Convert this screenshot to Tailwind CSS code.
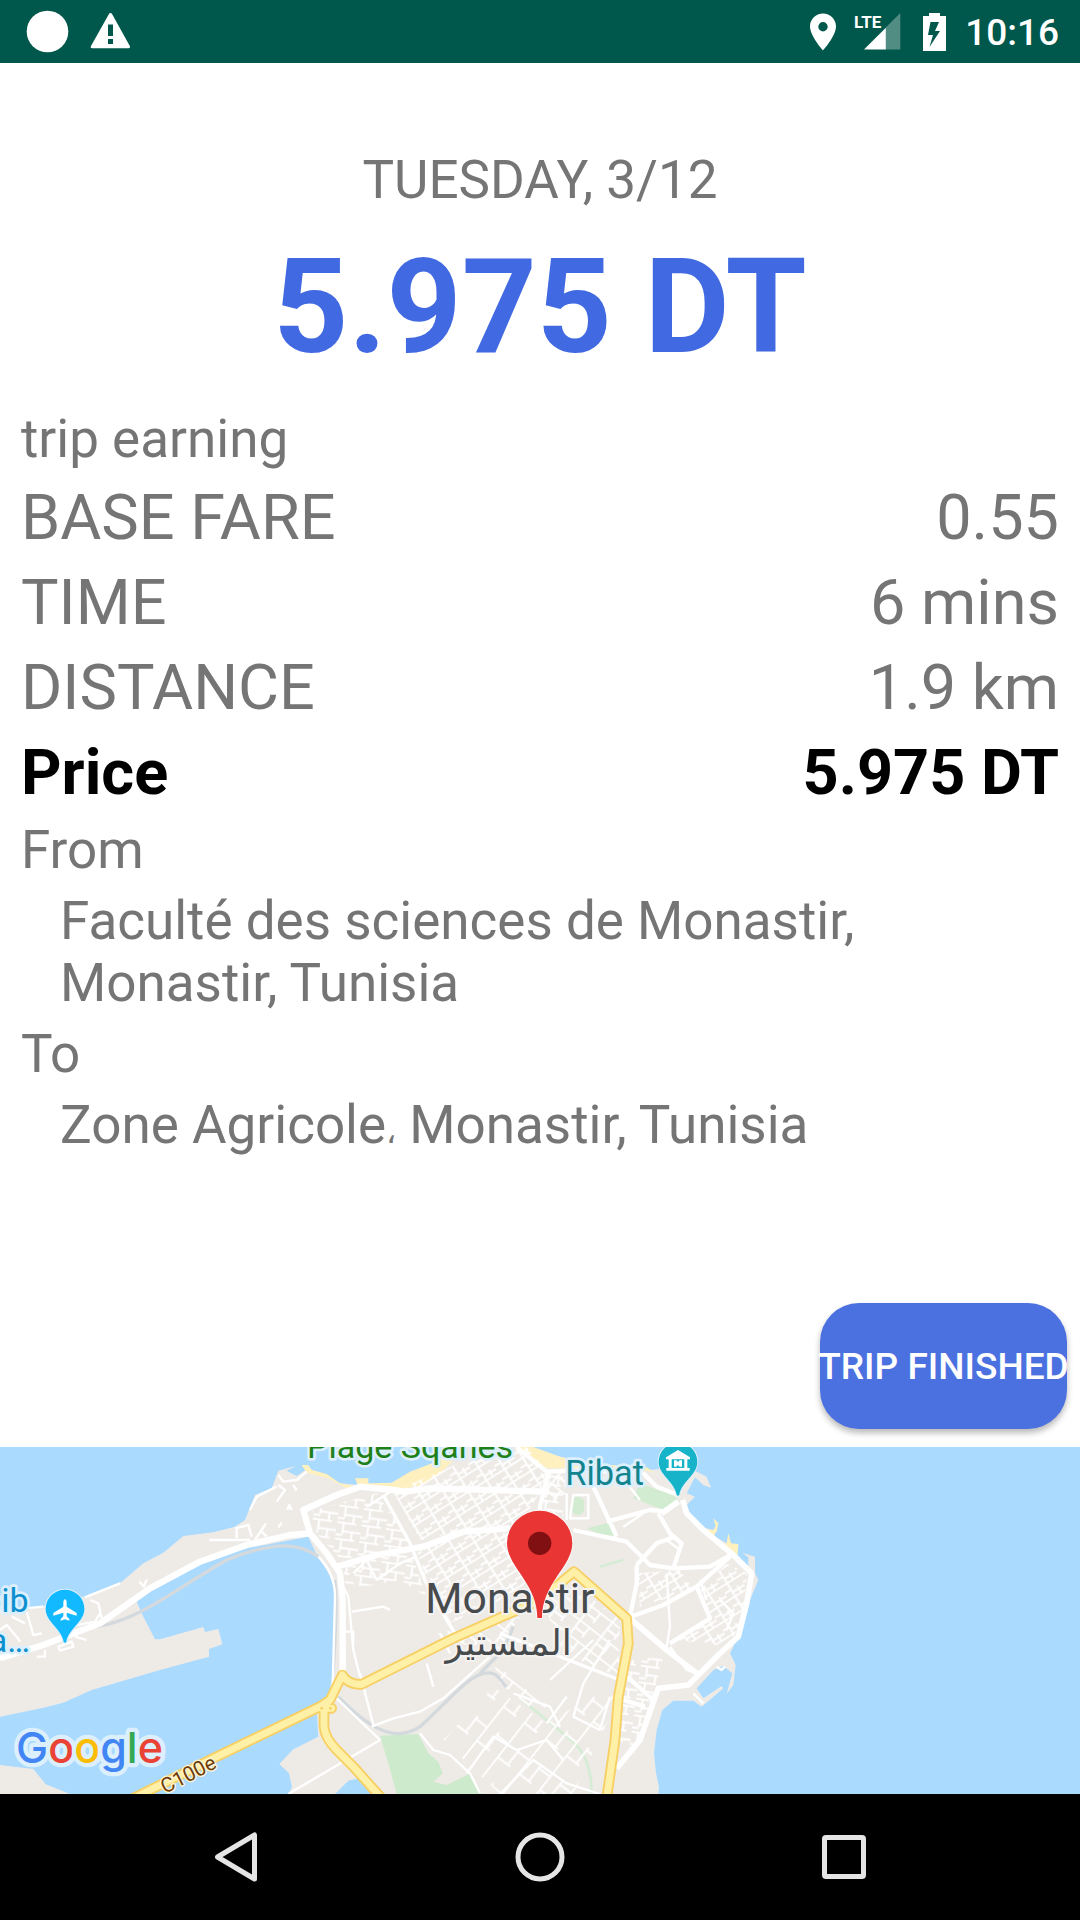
<!DOCTYPE html>
<html lang="en">
<head>
<meta charset="utf-8">
<meta name="viewport" content="width=device-width, initial-scale=1">
<title>Trip details</title>
<script src="https://cdn.jsdelivr.net/npm/@tailwindcss/browser@4"></script>
</head>
<body class="bg-white font-[Roboto,sans-serif] text-[#757575]">
<div class="flex min-h-screen flex-col">

  <!-- Status bar -->
  <header class="flex h-[63px] shrink-0 items-center justify-between bg-[#00574b] pl-[26px] pr-[21px] text-white">
    <div class="flex items-center gap-[21px]">
      <svg class="size-[43px]" viewBox="0 0 43 43" fill="currentColor" aria-hidden="true"><circle cx="21.5" cy="21.5" r="20.8"/></svg>
      <svg class="h-[43px] w-[41px]" viewBox="0 0 41 43" fill="currentColor" fill-rule="evenodd" aria-hidden="true"><path d="M20.5 3q1 0 1.700 1.200L39.800 36q.8 2.300-1.300 2.300h-36Q-.1 38.300 1 36L18.800 4.200Q19.500 3 20.500 3zM18 14.500v11.500h5V14.500zM18 29v5h5v-5z"/></svg>
    </div>
    <div class="flex items-center">
      <svg class="mr-[17px] h-[38px] w-[28px]" viewBox="0 0 28 38" fill="currentColor" fill-rule="evenodd" aria-hidden="true"><path d="M14 .5C6.800.5 1 6.200 1 13.500 1 23 14 37.500 14 37.500S27 23 27 13.500C27 6.200 21.200.5 14 .5zM14 9a4.700 4.700 0 1 1 0 9.400A4.700 4.700 0 0 1 14 9z"/></svg>
      <svg class="mr-[20px] h-[38px] w-[48px]" viewBox="0 0 48 38" fill="currentColor" aria-hidden="true">
        <text x="0" y="15" class="text-[17px] font-bold">LTE</text>
        <path d="M31.500 14.700L46.300 0V36.500H31.500z" opacity=".32"/><path d="M10 36.500L31.800 14.700V36.500z"/>
      </svg>
      <svg class="mr-[18px] h-[38px] w-[25px]" viewBox="0 0 25 38" fill="currentColor" fill-rule="evenodd" aria-hidden="true"><path d="M7 0h11v3h6v35H1V3h6zM8.500 9L6 22h5l-3.500 12L18 18h-5l4-9z"/></svg>
      <span class="pt-[2px] text-[37px] leading-[44px] font-medium">10:16</span>
    </div>
  </header>

  <main class="flex flex-1 flex-col">
    <section class="flex flex-col px-[21px] pt-[86px]">
      <p class="text-center text-[53px] leading-[62px]">TUESDAY, 3/12</p>
      <h1 class="mt-[19px] text-center text-[131px] leading-[154px] font-bold text-[#4169e1]">5.975 DT</h1>
      <h2 class="mt-[24px] text-[53px] leading-[62px]">trip earning</h2>
      <dl class="mt-[11px] flex flex-col gap-[11px] text-[63px] leading-[74px]">
        <div class="flex justify-between"><dt>BASE FARE</dt><dd>0.55</dd></div>
        <div class="flex justify-between"><dt>TIME</dt><dd>6 mins</dd></div>
        <div class="flex justify-between"><dt>DISTANCE</dt><dd>1.9 km</dd></div>
        <div class="flex justify-between font-bold text-black"><dt>Price</dt><dd>5.975 DT</dd></div>
      </dl>
      <dl class="mt-[9px] flex flex-col gap-[9px] text-[53px] leading-[62px]">
        <dt>From</dt>
        <dd class="max-w-[900px] pl-[39px]">Faculté des sciences de Monastir, Monastir, Tunisia</dd>
        <dt>To</dt>
        <dd class="pl-[39px]">Zone Agricole<span class="text-[32px] leading-none">،</span> Monastir, Tunisia</dd>
      </dl>
    </section>
    <div class="mt-auto flex justify-end px-[13px] pt-10 pb-[18px]">
      <button type="button" class="h-[126px] w-[247px] rounded-[39px] bg-[#4b71e1] pt-[2px] text-[37px] font-medium whitespace-nowrap text-white shadow-[0_4px_6px_rgba(0,0,0,0.28)]"><span class="-mx-4">TRIP FINISHED</span></button>
    </div>
  </main>

  <!-- Map of Monastir -->
  <svg class="h-[347px] w-full shrink-0 bg-[#abdaff]" viewBox="0 21 3240 1041" preserveAspectRatio="xMidYMid slice" role="img" aria-label="Map of Monastir">
    <defs>
      <pattern id="gridA" width="64" height="46" patternUnits="userSpaceOnUse" patternTransform="rotate(-32)"><path d="M0 2H64M22 2V46M0 25H22M44 25V46M22 34H64" fill="none" stroke="#fff" stroke-width="6"/></pattern>
      <pattern id="gridB" width="74" height="50" patternUnits="userSpaceOnUse" patternTransform="rotate(8)"><path d="M0 2H58M20 2V36M20 28H74M48 28V50M0 40H20" fill="none" stroke="#fff" stroke-width="6"/></pattern>
      <pattern id="gridC" width="80" height="54" patternUnits="userSpaceOnUse" patternTransform="rotate(38)"><path d="M0 2H80M25 2V54M25 28H60M60 2V40" fill="none" stroke="#fff" stroke-width="6"/></pattern>
      <pattern id="gridD" width="130" height="80" patternUnits="userSpaceOnUse" patternTransform="rotate(-52)"><path d="M0 2H130M40 2V50M90 40V80M40 40H100" fill="none" stroke="#fff" stroke-width="6"/></pattern>
      <path id="pin" d="M0-58A58 58 0 0 0-58 0C-58 38-10 60-4 98Q0 104 4 98C10 60 58 38 58 0A58 58 0 0 0 0-58z"/>
    </defs>

    <!-- land -->
    <path fill="#eeebe7" d="M0 515L100 505 250 470 365 425 430 370 490 338 550 288 640 277 705 260 735 240 765 165 815 145 835 92 888 78 860 92 890 108 925 85 960 100 1020 130 1075 135 1180 130 1240 95 1300 70 1380 21H1590L1680 50 1830 75 1950 90 2000 85 2090 95 2120 110 2133 143 2110 135 2085 112 2060 160 2085 170 2060 195 2072 225 2100 260 2140 270 2145 290 2180 310 2215 315 2210 345 2230 370 2245 378V352L2226 338 2265 350V400L2275 420 2250 480 2240 520 2218 570 2224 590 2205 610 2190 640 2207 675 2200 735 2180 762 2197 700 2170 678 2140 690 2090 745 2110 775 2165 738 2170 745 2105 800 2080 782H2020L1987 810 1970 870 1962 940 1968 1000 1977 1040 1975 1062H0z"/>
    <!-- bay -->
    <path fill="#abdaff" d="M925 290L740 325 590 370 460 445 410 485 430 530 465 598 480 598 610 561 615 576 655 567 667 613 627 627V650L480 690 275 750 190 788 130 803 0 830V975L100 987 137 1033 210 1062H865L876 1042 867 1000 838 972 880 928 955 890 950 810 985 775 995 720 1005 600 1008 440 980 390 950 345zM1005 1062L1045 1022 1100 1010 1125 1062z"/>
    <!-- beaches -->
    <g fill="#fff0bf">
      <path d="M905 75H925L935 90 980 102 1020 130 1075 140 1065 115H1105V130L1175 128 1230 95 1300 68 1350 40 1365 21H1400L1330 90 1280 130 1200 150 1130 135 1040 145 985 115 920 98zM1555 21H1600L1680 50 1715 62 1830 75 1940 82 1960 95 1860 85 1720 85 1640 85zM2100 268L2140 270 2147 258 2140 235 2155 250 2150 275 2135 292zM2145 310L2180 310 2185 280 2193 310 2215 312 2212 352z"/>
    </g>
    <!-- parks -->
    <g fill="#d2ecd1">
      <path d="M1140 887L1255 882 1285 940 1315 965 1328 1000 1300 1025 1340 1035 1407 1002 1445 1062H1190L1165 970z" fill="#cdeacc"/>
      <path d="M1918 130L1960 145 2020 165 2035 180 1990 210 1900 175zM1762 265L1825 248 1845 287 1800 285z"/><rect x="1713" y="170" width="40" height="55" rx="20"/>
    </g>
    <path d="M1560 775L1725 910Q1775 960 1775 1062M1800 380L1870 360" fill="none" stroke="#d5ecd5" stroke-width="8"/>

    <!-- dense street grids -->
    <path fill="url(#gridB)" d="M925 215L1130 160 1240 320 1025 360 950 280zM1030 370L1230 330 1280 470 1200 420 1090 440 1035 430z"/>
    <path fill="url(#gridA)" d="M1180 155L1400 60 1580 21 1640 90 1625 150 1560 250 1400 270 1260 300zM1250 330L1400 280 1600 270 1570 450 1350 550 1280 420z"/>
    <path fill="url(#gridC)" d="M1640 90L1700 100 1700 160 1625 200zM1630 490L1730 440 1860 540 1855 710 1690 640zM1480 665L1640 800 1600 810 1500 730z"/>
    <path fill="url(#gridA)" d="M1910 400L2040 390 2080 450 1920 500zM2100 450L2180 370 2240 400 2230 520 2190 620 2030 600 2130 540z"/>
    <path fill="url(#gridB)" d="M1895 660L1990 650 1960 760 1900 950 1860 900 1870 760zM1640 100H1690V240H1620z"/>
    <path fill="url(#gridD)" d="M1330 900L1480 740 1640 850 1860 720 1830 830 1720 1062H1500z"/>
    <path fill="url(#gridC)" d="M1310 580L1560 530 1490 640 1380 610z"/>

    <!-- railway -->
    <path d="M290 560C420 540 520 450 680 360C830 300 900 310 955 350M1015 770C1130 890 1200 900 1260 860C1330 800 1400 710 1450 700S1500 730 1520 740M1440 700L1510 630 1540 560" fill="none" stroke="#d3d9dc" stroke-width="10"/>
    <path d="M1005 420Q1015 500 1000 700" fill="none" stroke="#d3d9dc" stroke-width="7"/>

    <!-- minor streets -->
    <g fill="none" stroke="#fff" stroke-width="7" stroke-linejoin="round">
      <path d="M0 512L130 500M255 472L360 430M628 300H750M705 265L745 255 755 290M710 295V265M765 300L798 250M780 270L800 290M830 185L855 150 835 135M835 105L850 125 890 120 920 95M750 210L770 170 830 140M880 135L890 152M862 210L868 195 875 210M835 262L845 248M418 425L432 440 440 418M80 515L100 585 125 580M0 570L20 555 50 590 60 605M35 530L75 550M270 480L295 490 305 535M205 560L285 545 300 520M110 650H135V630M175 620L215 605 220 620 180 632zM225 590L260 600"/>
      <path d="M955 350Q1005 400 1005 470L998 740M1030 440L1045 470 1060 630 1080 710M1055 515L1150 500 1170 510M1035 575H1060V610M1010 775L1140 900 865 1062M1115 860L1180 835 1260 815 1330 775M1080 700L1120 855M1260 880L1300 930 1350 945 1410 1000 1440 1060M1400 1000L1480 890 1550 930 1640 900 1690 960M1330 775L1470 650M1280 670L1300 740M1320 580L1350 640M1640 850L1700 770M1100 200L1180 150M1060 400L1100 360 1130 420M1130 420L1200 370 1250 350M1540 760L1650 800 1680 860"/>
      <path d="M1700 160V240M1720 165H1765V235H1710zM2000 400L2010 560 2000 620M2000 300L2040 330M1880 130L1920 180M1870 260L1930 220M2010 620L2060 690 2090 700M1830 600L1750 730 1720 830M1780 600L1650 720M1720 830L1800 870 1830 770M2120 480L2100 420M2150 680L2165 690 2175 680M2080 760L2110 790M2160 480L2200 520 2180 570M1500 1062L1600 960 1700 1030 1800 1062"/>
    </g>
    <!-- main streets -->
    <g fill="none" stroke="#fff" stroke-width="13" stroke-linejoin="round">
      <path d="M1150 165L1230 310 1275 420 1310 490 1365 580M1500 580L1860 720" stroke-width="10"/>
      <path d="M1620 250V200L1645 95M1550 21L1640 95 1760 90 1930 100M1780 140L1850 290M1820 245L1950 210 2000 215M1720 270L1880 305 1950 375 2020 385 2130 380 2200 340M1930 100L1970 140 2035 165M1910 375V430L1890 530M1880 535L1990 495 2090 440 2190 350M1975 220L2010 280 2045 310 2020 385M1910 375L1970 310 2025 290M2090 440L2130 535 2010 610M1870 700L1960 780M1870 780L1935 800"/>
      <path d="M0 655L130 615 300 550 450 445 600 365 740 315 870 285 930 280M930 280L910 210 1010 165 1080 140 1180 150 1215 155 1290 145 1640 155M930 280L980 340 1020 400 1028 480V705M1010 380L1130 345 1270 320 1390 275 1530 265" stroke-width="19"/>
      <path d="M2035 185L1985 220M2048 180L2060 220 2110 270 2200 345 2255 400 2240 490 2215 590 2160 640 2065 735 1975 745 1955 800 1920 900 1850 985M1895 540L2000 630 2090 700" stroke-width="17"/>
    </g>
    <!-- highways -->
    <g fill="none" stroke-linejoin="round" stroke-linecap="round">
      <g stroke="#f7cf62" stroke-width="32">
        <path d="M400 1075L640 955 960 800 990 780 1027 705Q1045 735 1085 733L1360 595 1620 480 1722 395 1880 535 1885 610 1855 770 1845 900 1820 1075M972 810V860Q975 895 1010 930L1060 980 1145 1075M965 805H995"/>
      </g>
      <path d="M400 1075L640 955 960 800 990 780 1027 705Q1045 735 1085 733L1360 595 1620 480 1722 395 1880 535 1885 610 1855 770 1845 900 1820 1075M972 810V860Q975 895 1010 930L1060 980 1145 1075M965 805H995" stroke="#fff0a8" stroke-width="21"/>
    </g>
    <g fill="#f7cf62"><circle cx="965" cy="805" r="4"/><circle cx="991" cy="805" r="4"/></g>

    <!-- labels -->
    <g class="font-[Roboto,sans-serif]" paint-order="stroke" stroke-linejoin="round">
      <g stroke="#dceffc" stroke-width="16">
        <text x="921" y="53" font-size="102" fill="#1e8019">Plage Sqanes</text>
        <text x="1696" y="136" font-size="103" fill="#13848d">Ribat</text>
        <text x="86" y="517" font-size="102" text-anchor="end" fill="#0d90d0">bib</text>
        <text x="90" y="637" font-size="102" text-anchor="end" fill="#0d90d0">a…</text>
      </g>
      <g stroke="#f4f2f0" stroke-width="12" fill="#474b4e">
        <text x="1276" y="518" font-size="128">Monastir</text>
        <text x="1526" y="646" font-size="108" text-anchor="middle" font-family="DejaVu Sans, sans-serif" lang="ar">المنستير</text>
      </g>
      <text transform="translate(574 1022) rotate(-27)" font-size="62" text-anchor="middle" stroke="#fff5d0" stroke-width="8" fill="#6e3c08">C100e</text>
      <text x="48" y="970" font-size="129" class="font-[Inter,sans-serif] font-medium" stroke="#dceffc" stroke-width="26"><tspan fill="#4285f4">G</tspan><tspan fill="#ea4335">o</tspan><tspan fill="#fbbc05">o</tspan><tspan fill="#4285f4">g</tspan><tspan fill="#34a853">l</tspan><tspan fill="#ea4335">e</tspan></text>
    </g>

    <!-- pins -->
    <g transform="translate(195 507)">
      <use href="#pin" fill="#12b9ff" stroke="#dceffc" stroke-width="6" paint-order="stroke"/>
      <path fill="#fff" d="M0-30Q5-28 5-20V-7L35 12V20L5 11V22L13 30V35L0 31-13 35V30L-5 22V11L-35 20V12L-5-7V-20Q-5-28 0-30z"/>
    </g>
    <g transform="translate(2034 66)">
      <use href="#pin" fill="#17b4c9" stroke="#dceffc" stroke-width="6" paint-order="stroke"/>
      <path fill="#fff" fill-rule="evenodd" d="M0-36L36-14V-8H28V18H35V26H-35V18H-28V-8H-36V-14zM-19-8V18H19V-8zM-12-5H-5L0 0 5-5H12V14H5L0 9-5 14H-12z"/>
    </g>
    <path d="M1619 212A98 98 0 0 0 1521 310C1521 380 1612 430 1612 534H1626C1626 430 1717 380 1717 310A98 98 0 0 0 1619 212z" fill="#ea3535" stroke="#fff" stroke-width="4" paint-order="stroke"/>
    <circle cx="1619" cy="310" r="35" fill="#811012"/>
  </svg>

  <!-- System navigation -->
  <nav class="flex h-[126px] shrink-0 items-center justify-center bg-black text-[#e5e5e5]" aria-label="System">
    <button type="button" aria-label="Back" class="flex w-[304px] justify-center"><svg class="size-[54px]" viewBox="0 0 54 54" fill="none" stroke="currentColor" stroke-width="5" stroke-linejoin="round"><path d="M8.500 27L45.500 5V49z"/></svg></button>
    <button type="button" aria-label="Home" class="flex w-[304px] justify-center"><svg class="size-[54px]" viewBox="0 0 54 54" fill="none" stroke="currentColor" stroke-width="5"><circle cx="27" cy="27" r="22"/></svg></button>
    <button type="button" aria-label="Overview" class="flex w-[304px] justify-center"><svg class="size-[54px]" viewBox="0 0 54 54" fill="none" stroke="currentColor" stroke-width="5"><rect x="7.500" y="7.500" width="39" height="39" rx="1.500"/></svg></button>
  </nav>
</div>
</body>
</html>
